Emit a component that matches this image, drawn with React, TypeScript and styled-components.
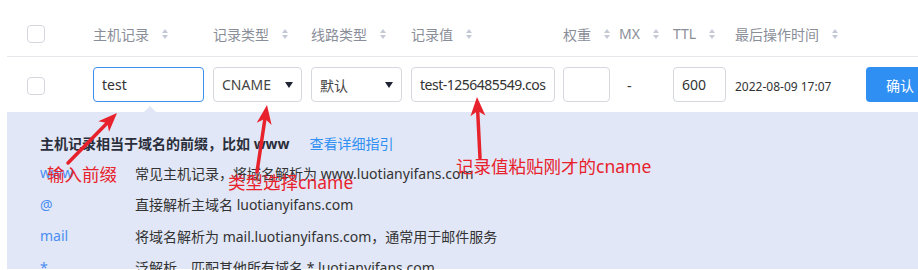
import styled, { createGlobalStyle } from 'styled-components';

const GlobalStyle = createGlobalStyle`
    html, body {
        margin: 0;
        padding: 0;
        overflow: hidden;
        background: #fff;
    }
    body {
        font-family: "Noto Sans", "Noto Sans CJK SC", sans-serif;
        color: #333;
    }
`

const Page = styled.div`
    position: relative;
    width: 918px;
    height: 270px;
    overflow: hidden;
`

const Tabla = styled.div`
    margin-left: 7px;
`

const columnas = '86px 120px 98px 100px 152px 56px 54px 62px 131px 1fr';

const Cabecera = styled.div`
    display: grid;
    grid-template-columns: ${columnas};
    align-items: center;
    height: 57px;
    padding-top: 11px;
    box-sizing: border-box;
    border-bottom: 1px solid #e6e8ec;
`

const Fila = styled.div`
    display: grid;
    grid-template-columns: ${columnas};
    align-items: center;
    height: 55px;
    padding-top: 10px;
    padding-bottom: 10px;
    box-sizing: border-box;
`

const CeldaCheck = styled.div`
    padding-left: 20px;
    display: flex;
    align-items: center;
`

const Check = styled.span<{ $bajar?: number }>`
    display: block;
    width: 16px;
    height: 16px;
    border: 1px solid #d3d6dd;
    border-radius: 4px;
    background: #fff;
    margin-top: ${p => p.$bajar || 0}px;
`

const Titulo = styled.div`
    display: flex;
    align-items: center;
    gap: 13px;
    font-size: 14px;
    color: #8a8e99;
    white-space: nowrap;
`

const Orden = styled.span`
    display: flex;
    flex-direction: column;
    gap: 2px;
    &::before, &::after {
        content: '';
        display: block;
        width: 0;
        height: 0;
        border-left: 3px solid transparent;
        border-right: 3px solid transparent;
    }
    &::before {
        border-bottom: 4px solid #c3cad6;
    }
    &::after {
        border-top: 4px solid #c3cad6;
    }
`

const Entrada = styled.input<{ $ancho: number; $foco?: boolean; $apretado?: boolean }>`
    width: ${p => p.$ancho}px;
    height: 35px;
    box-sizing: border-box;
    padding: 0 8px;
    border: 1px solid ${p => (p.$foco ? '#3d8ff0' : '#d5d8de')};
    border-radius: 4px;
    font-family: "Noto Sans", "Noto Sans CJK SC", sans-serif;
    font-size: 14px;
    letter-spacing: ${p => (p.$apretado ? '-0.5px' : 'normal')};
    color: #333;
    background: #fff;
    outline: none;
`

const Selector = styled.div<{ $ancho: number }>`
    width: ${p => p.$ancho}px;
    height: 35px;
    box-sizing: border-box;
    padding: 0 8px;
    border: 1px solid #d5d8de;
    border-radius: 4px;
    display: flex;
    align-items: center;
    justify-content: space-between;
    font-size: 14px;
    color: #444;
    &::after {
        content: '';
        width: 0;
        height: 0;
        border-left: 4px solid transparent;
        border-right: 4px solid transparent;
        border-top: 6px solid #1f2433;
    }
`

const Guion = styled.span`
    padding-left: 8px;
    font-size: 14px;
    color: #333;
`

const Fecha = styled.span`
    font-size: 12px;
    color: #333;
    white-space: nowrap;
`

const Boton = styled.button`
    width: 68px;
    height: 35px;
    border: none;
    border-radius: 4px;
    background: #2f8ff3;
    color: #fff;
    font-family: "Noto Sans", "Noto Sans CJK SC", sans-serif;
    font-size: 14px;
    text-align: center;
`

const Panel = styled.div`
    position: relative;
    background: #e1e7f6;
    padding: 19px 0 0 33px;
    height: 157px;
    box-sizing: border-box;
    &::before {
        content: '';
        position: absolute;
        top: -6px;
        left: 137px;
        border-left: 6px solid transparent;
        border-right: 6px solid transparent;
        border-bottom: 6px solid #e1e7f6;
    }
`

const Encabezado = styled.div`
    display: flex;
    align-items: center;
    height: 24px;
    font-size: 14px;
    margin-bottom: 2px;
`

const Negrita = styled.b`
    color: #2a2e3a;
    font-weight: 700;
`

const Enlace = styled.span`
    margin-left: 20px;
    color: #2f8ff3;
`

const Item = styled.div`
    display: grid;
    grid-template-columns: 95px 1fr;
    align-items: center;
    height: 31.5px;
    font-size: 14px;
    white-space: nowrap;
`

const Clave = styled.span`
    color: #4b8ef2;
`

const Desc = styled.span`
    color: #333;
`

const Capa = styled.svg`
    position: absolute;
    left: 0;
    top: 0;
    pointer-events: none;
`

const Nota = styled.span<{ $x: number; $y: number }>`
    position: absolute;
    left: ${p => p.$x}px;
    top: ${p => p.$y}px;
    font-size: 17.5px;
    line-height: 20px;
    color: #e8222c;
    white-space: nowrap;
`

const cabeceras = ['主机记录', '记录类型', '线路类型', '记录值', '权重', 'MX', 'TTL', '最后操作时间'];

const ayudas = [
    { clave: 'www', desc: '常见主机记录，将域名解析为 www.luotianyifans.com' },
    { clave: '@', desc: '直接解析主域名 luotianyifans.com' },
    { clave: 'mail', desc: '将域名解析为 mail.luotianyifans.com，通常用于邮件服务' },
    { clave: '*', desc: '泛解析，匹配其他所有域名 *.luotianyifans.com' },
]

const flechas = [
    { cola: [68, 163], punta: [117, 113] },
    { cola: [257, 172], punta: [267, 105] },
    { cola: [480, 158], punta: [477, 97] },
]

const Flecha = ({ cola, punta }: { cola: number[]; punta: number[] }) => {
    const dx = punta[0] - cola[0];
    const dy = punta[1] - cola[1];
    const largo = Math.hypot(dx, dy);
    const ux = dx / largo;
    const uy = dy / largo;
    const px = -uy;
    const py = ux;
    const cabeza = 19;
    const ancho = 7.5;
    const bx = punta[0] - ux * cabeza;
    const by = punta[1] - uy * cabeza;
    const nx = punta[0] - ux * (cabeza - 5);
    const ny = punta[1] - uy * (cabeza - 5);
    const pts = [
        [punta[0], punta[1]],
        [bx + px * ancho, by + py * ancho],
        [nx, ny],
        [bx - px * ancho, by - py * ancho],
    ].map(p => p.join(',')).join(' ');
    return (
        <g>
            <line x1={cola[0]} y1={cola[1]} x2={nx} y2={ny} stroke="#e8222c" strokeWidth={3.5} strokeLinecap="round" />
            <polygon points={pts} fill="#e8222c" />
        </g>
    )
}

export default function App() {
    return (
        <Page>
            <GlobalStyle />
            <Tabla>
                <Cabecera>
                    <CeldaCheck><Check /></CeldaCheck>
                    {cabeceras.map(t => (
                        <Titulo key={t}>{t}<Orden /></Titulo>
                    ))}
                    <div />
                </Cabecera>
                <Fila>
                    <CeldaCheck><Check $bajar={3} /></CeldaCheck>
                    <div><Entrada $ancho={111} $foco defaultValue="test" /></div>
                    <div><Selector $ancho={89}>CNAME</Selector></div>
                    <div><Selector $ancho={91}>默认</Selector></div>
                    <div><Entrada $ancho={144} $apretado defaultValue="test-1256485549.cos.ap-guangzhou.myqcloud.com" /></div>
                    <div><Entrada $ancho={47} defaultValue="" /></div>
                    <div><Guion>-</Guion></div>
                    <div><Entrada $ancho={53} defaultValue="600" /></div>
                    <div><Fecha>2022-08-09 17:07</Fecha></div>
                    <div><Boton>确认</Boton></div>
                </Fila>
                <Panel>
                    <Encabezado>
                        <Negrita>主机记录相当于域名的前缀，比如 www</Negrita>
                        <Enlace>查看详细指引</Enlace>
                    </Encabezado>
                    {ayudas.map(a => (
                        <Item key={a.clave}>
                            <Clave>{a.clave}</Clave>
                            <Desc>{a.desc}</Desc>
                        </Item>
                    ))}
                </Panel>
            </Tabla>
            <Capa width={918} height={270}>
                {flechas.map((f, i) => <Flecha key={i} cola={f.cola} punta={f.punta} />)}
            </Capa>
            <Nota $x={47} $y={164}>输入前缀</Nota>
            <Nota $x={228} $y={172}>类型选择cname</Nota>
            <Nota $x={456} $y={156}>记录值粘贴刚才的cname</Nota>
        </Page>
    )
}
